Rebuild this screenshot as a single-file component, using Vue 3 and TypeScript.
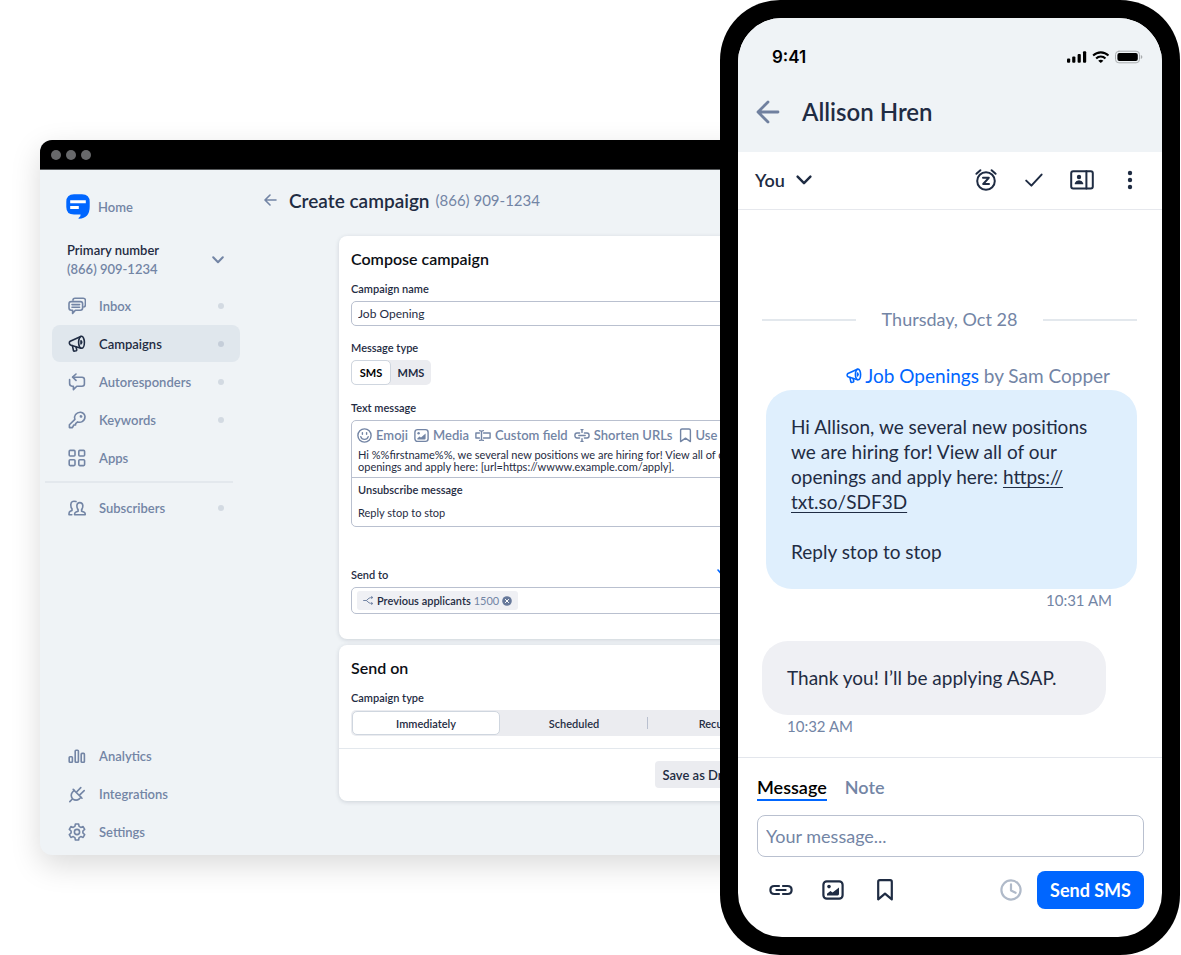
<script setup lang="ts">
import { ref } from 'vue'

interface NavItem {
  label: string
  icon: string
  dot?: boolean
  active?: boolean
}

const icons: Record<string, string[]> = {
  inbox: [
    'M5 3.2V3Q5 1.2 7 1.2H15.2Q17.4 1.2 17.4 3.3V7.8Q17.4 9.8 15.8 10',
    'M3.2 4.6H12.4Q14.6 4.6 14.6 6.7V11Q14.6 13.2 12.4 13.2H7.4L4.6 16.4V13.2H3.2Q1 13.2 1 11V6.7Q1 4.6 3.2 4.6Z',
    'M4 7.6H11.6M4 10.2H11.6',
  ],
  campaigns: [
    'M10.6 7.3a2.9 6 0 1 0 5.8 0a2.9 6 0 1 0 -5.8 0Z',
    'M12.8 1.4L2.2 6.2Q1 7 1.4 8.6Q1.8 9.9 3 10.2L13 13.2',
    'M4.4 10.6L5.4 15.4Q5.7 16.4 6.8 16.1L8.2 15.7Q8.9 15.4 8.7 14.6L8 11.8',
    'M13 5.8Q14.4 7.3 13 8.8Z',
  ],
  auto: [
    'M8 1L4.6 4.2L8 7.4',
    'M4.8 4.2H14Q16.4 4.2 16.4 6.5V11Q16.4 13.2 14 13.2H8.8L5.4 16.6V13.2H4Q1.6 13 1.6 10.6V6.6',
  ],
  keywords: [
    'M6.9 8.4Q6 5.6 7.6 3.4Q9.6 1 12.6 1.2Q16.4 1.8 17 5.4Q17 9 14.2 10.6Q12 11.8 9.6 10.9L7.6 12.6V14H5.8L4.4 16.6H1.4V13.8Z',
    'M12.4 5.4a.6 .6 0 1 0 1.2 0a.6 .6 0 1 0 -1.2 0Z',
  ],
  apps: [
    'M2.2 1.4H6Q7 1.4 7 2.4V6Q7 7 6 7H2.2Q1.2 7 1.2 6V2.4Q1.2 1.4 2.2 1.4Z',
    'M11.8 1.4H15.6Q16.6 1.4 16.6 2.4V6Q16.6 7 15.6 7H11.8Q10.8 7 10.8 6V2.4Q10.8 1.4 11.8 1.4Z',
    'M2.2 10.8H6Q7 10.8 7 11.8V15.6Q7 16.6 6 16.6H2.2Q1.2 16.6 1.2 15.6V11.8Q1.2 10.8 2.2 10.8Z',
    'M11.8 10.8H15.6Q16.6 10.8 16.6 11.8V15.6Q16.6 16.6 15.6 16.6H11.8Q10.8 16.6 10.8 15.6V11.8Q10.8 10.8 11.8 10.8Z',
  ],
  subscribers: [
    'M6.6 15.8H17.2Q17.4 13.6 15.8 13L13.6 12.2V10.6Q15 9 14.8 6.4Q14.5 3.6 11.8 3.6Q9.2 3.6 8.9 6.4Q8.7 9 10.1 10.6V12.2L8 13Q6.4 13.6 6.6 15.8Z',
    'M8 2.6Q3.2 1.2 2.8 5.6Q2.7 8.4 4 9.8V11.4L2.2 12.2Q.8 12.9 1 15.8H3.8',
  ],
  analytics: [
    'M2 9.8H3.6Q4.4 9.8 4.4 10.6V14.4Q4.4 15.2 3.6 15.2H2Q1.2 15.2 1.2 14.4V10.6Q1.2 9.8 2 9.8Z',
    'M8 3.2H9.6Q10.4 3.2 10.4 4V14.4Q10.4 15.2 9.6 15.2H8Q7.2 15.2 7.2 14.4V4Q7.2 3.2 8 3.2Z',
    'M14 6.4H15.6Q16.4 6.4 16.4 7.2V14.4Q16.4 15.2 15.6 15.2H14Q13.2 15.2 13.2 14.4V7.2Q13.2 6.4 14 6.4Z',
  ],
  integrations: [
    'M5.2 4.4L14 13.2',
    'M6.2 5.4L4.4 7.2Q2 10.4 4.6 13.8Q8 16.4 11.2 14L13 12.2',
    'M8.8 6.8L12.8 2.6M11.8 9.8L16.2 5.6M4.4 14L1.8 16.6',
  ],
  settings: [
    'M6.9 3.4L7.4 1H10.6L11.1 3.4L12.8 4.4L15.1 3.6L16.7 6.4L14.9 8V10L16.7 11.6L15.1 14.4L12.8 13.6L11.1 14.6L10.6 17H7.4L6.9 14.6L5.2 13.6L2.9 14.4L1.3 11.6L3.1 10V8L1.3 6.4L2.9 3.6L5.2 4.4Z',
    'M6.4 9a2.6 2.6 0 1 0 5.2 0a2.6 2.6 0 1 0 -5.2 0Z',
  ],
}

const primaryNav: NavItem[] = [
  { label: 'Inbox', icon: 'inbox', dot: true },
  { label: 'Campaigns', icon: 'campaigns', dot: true, active: true },
  { label: 'Autoresponders', icon: 'auto', dot: true },
  { label: 'Keywords', icon: 'keywords', dot: true },
  { label: 'Apps', icon: 'apps' },
]
const peopleNav: NavItem[] = [{ label: 'Subscribers', icon: 'subscribers', dot: true }]
const footNav: NavItem[] = [
  { label: 'Analytics', icon: 'analytics' },
  { label: 'Integrations', icon: 'integrations' },
  { label: 'Settings', icon: 'settings' },
]
const navGroups = [
  { name: 'primary', items: primaryNav },
  { name: 'people', items: peopleNav },
  { name: 'foot', items: footNav },
]

const campaignName = ref('Job Opening')
const messageType = ref('SMS')
const schedule = ref('Immediately')
const draft = ref('')
const tab = ref('Message')
</script>

<template>
  <div class="stage">
    <section class="browser">
      <div class="titlebar"><i></i><i></i><i></i></div>
      <div class="app">
        <aside class="sidebar">
          <a class="home" href="#">
            <svg width="24" height="25" viewBox="0 0 24 25">
              <path d="M8 .3H16Q23.7 .3 23.7 8V12.5Q23.7 24.3 13 24.8Q12 24.8 12.6 24Q15 22.6 14.6 20.6H8Q.3 20.6 .3 13V8Q.3 .3 8 .3Z" />
              <path d="M4.2 6.2H19.8V9.2H4.2ZM4.2 12H12.8V15H4.2Z" />
            </svg>
            Home
          </a>
          <button class="account" type="button">
            <span><strong>Primary number</strong><em>(866) 909-1234</em></span>
            <svg width="12" height="8" viewBox="0 0 12 8"><path d="M1.2 1.2L6 6.2L10.8 1.2" /></svg>
          </button>
          <nav v-for="group in navGroups" :key="group.name" :class="['nav', group.name]">
            <a v-for="item in group.items" :key="item.label" href="#" :class="{ active: item.active }">
              <svg width="18" height="18" viewBox="0 0 18 18">
                <path v-for="d in icons[item.icon]" :key="d" :d="d" />
              </svg>
              <span>{{ item.label }}</span>
              <i v-if="item.dot"></i>
            </a>
          </nav>
        </aside>

        <main class="main">
          <header class="page-head">
            <a href="#" aria-label="Back">
              <svg width="13" height="12" viewBox="0 0 13 12"><path d="M12 6H1.2M6 1L1 6L6 11" /></svg>
            </a>
            <h1>Create campaign</h1>
            <span>(866) 909-1234</span>
          </header>

          <form class="cards" @submit.prevent>
            <section class="card">
              <h2>Compose campaign</h2>
              <label class="label" for="campaign-name">Campaign name</label>
              <input id="campaign-name" v-model="campaignName" class="field" type="text" />

              <span class="label">Message type</span>
              <div class="toggle">
                <button
                  v-for="t in ['SMS', 'MMS']"
                  :key="t"
                  type="button"
                  :class="{ on: messageType === t }"
                  @click="messageType = t"
                >{{ t }}</button>
              </div>

              <span class="label">Text message</span>
              <div class="editor">
                <div class="tools">
                  <button type="button">
                    <svg width="15" height="15" viewBox="0 0 15 15">
                      <circle cx="7.5" cy="7.5" r="6.6" />
                      <path d="M5.4 4.6V6.2M9.6 4.6V6.2M3.8 8.6Q4.6 11.4 7.5 11.4Q10.4 11.4 11.2 8.6" />
                    </svg>
                    Emoji
                  </button>
                  <button type="button">
                    <svg width="15" height="15" viewBox="0 0 15 15">
                      <rect x=".9" y="1.6" width="13.2" height="11.8" rx="2.6" />
                      <path class="solid" d="M3.4 11.4V10.2L5.6 8.4L7 9.4L11.6 5.6V10.4Q11.6 11.4 10.6 11.4Z" />
                      <circle class="solid" cx="4.6" cy="5.2" r="1.2" />
                    </svg>
                    Media
                  </button>
                  <button type="button">
                    <svg width="16" height="15" viewBox="0 0 16 15">
                      <path d="M4.4 5H.9V10H4.4M8.6 5H15.1V10H8.6M4.6 2.6Q6.4 2.6 6.5 3.8V11.2Q6.4 12.4 4.6 12.4M8.4 2.6Q6.6 2.6 6.5 3.8M6.5 11.2Q6.6 12.4 8.4 12.4" />
                    </svg>
                    Custom field
                  </button>
                  <button type="button">
                    <svg width="16" height="15" viewBox="0 0 16 15">
                      <path d="M5.6 10H3Q.9 10 .9 7.5Q.9 5 3 5H5.6M10.4 5H13Q15.1 5 15.1 7.5Q15.1 10 13 10H10.4M4.8 7.5H11.2M8 2.2V4.4M8 10.6V12.8M7 1.6H9M7 13.4H9" />
                    </svg>
                    Shorten URLs
                  </button>
                  <button type="button">
                    <svg width="13" height="15" viewBox="0 0 13 15">
                      <path d="M3 1H10Q11.4 1 11.4 2.4V13.6L6.5 10.2L1.6 13.6V2.4Q1.6 1 3 1Z" />
                    </svg>
                    Use template
                  </button>
                </div>
                <p class="body">
                  Hi %%firstname%%, we several new positions we are hiring for! View all of our<br />
                  openings and apply here: [url=https://wwww.example.com/apply].
                </p>
                <div class="unsub">
                  <strong>Unsubscribe message</strong>
                  <p>Reply stop to stop</p>
                </div>
              </div>

              <div class="send-row">
                <span class="label">Send to</span>
                <svg width="80" height="10" viewBox="0 0 80 10"><path d="M1 4L4 7.4L7.4 4" /></svg>
              </div>
              <div class="recipients">
                <span class="chip">
                  <svg width="11" height="9" viewBox="0 0 11 9"><path d="M.6 4.5H3.4L6 2.2Q7 1.5 9.4 1.5M3.4 4.5L6 6.8Q7 7.5 9.4 7.5M8.6 .6L9.8 1.5L8.6 2.4M8.6 6.6L9.8 7.5L8.6 8.4" /></svg>
                  <b>Previous applicants</b> 1500
                  <button type="button" aria-label="Remove">
                    <svg width="10" height="10" viewBox="0 0 10 10">
                      <circle cx="5" cy="5" r="4.8" /><path d="M3.4 3.4L6.6 6.6M6.6 3.4L3.4 6.6" />
                    </svg>
                  </button>
                </span>
              </div>
            </section>

            <section class="card send-on">
              <h2>Send on</h2>
              <span class="label">Campaign type</span>
              <div class="segments">
                <button
                  v-for="s in ['Immediately', 'Scheduled', 'Recurring']"
                  :key="s"
                  type="button"
                  :class="{ on: schedule === s }"
                  @click="schedule = s"
                >{{ s }}</button>
              </div>
              <footer><button type="button">Save as Draft</button></footer>
            </section>
          </form>
        </main>
      </div>
    </section>

    <section class="phone">
      <div class="screen">
        <header class="top">
          <div class="status">
            <span>9:41</span>
            <svg width="76" height="14" viewBox="0 0 76 14">
              <rect x="0" y="8.6" width="3.2" height="4.2" rx="1" />
              <rect x="5.2" y="6.6" width="3.2" height="6.2" rx="1" />
              <rect x="10.6" y="4" width="3.2" height="8.8" rx="1" />
              <rect x="16" y="1.2" width="3.2" height="11.6" rx="1" />
              <path d="M25.4 4.8Q29 1.2 33.8 1.2Q38.6 1.2 42.2 4.8L40.8 6.3Q37.8 3.4 33.8 3.4Q29.8 3.4 26.8 6.3Z" />
              <path d="M28.4 7.8Q30.6 5.4 33.8 5.4Q37 5.4 39.2 7.8L37.7 9.3Q36 7.6 33.8 7.6Q31.6 7.6 29.9 9.3Z" />
              <path d="M31.2 10.7Q33.8 8.7 36.4 10.7L33.8 13Z" />
              <rect class="case" x="48.5" y="1.2" width="24" height="11.6" rx="3.4" />
              <rect x="50.4" y="3" width="20.4" height="8" rx="2" />
              <path class="cap" d="M73.8 5V9Q75.4 8.4 75.4 7Q75.4 5.6 73.8 5Z" />
            </svg>
          </div>
          <div class="contact">
            <a href="#" aria-label="Back">
              <svg width="24" height="24" viewBox="0 0 24 24"><path d="M22 12H2M12 2L2 12L12 22" /></svg>
            </a>
            <h2>Allison Hren</h2>
          </div>
        </header>

        <div class="actions">
          <button class="you" type="button">
            You
            <svg width="16" height="10" viewBox="0 0 16 10"><path d="M1.6 1.6L8 8.2L14.4 1.6" /></svg>
          </button>
          <button type="button" aria-label="Snooze">
            <svg width="24" height="24" viewBox="0 0 24 24">
              <circle cx="12" cy="13" r="8.8" />
              <path d="M2.4 5.8L6.4 2.2M21.6 5.8L17.6 2.2M9 9.8H14.8L9.2 16H15" />
            </svg>
          </button>
          <button type="button" aria-label="Done">
            <svg width="24" height="24" viewBox="0 0 24 24"><path d="M4.2 12.6L9.4 17.6L19.6 6.6" /></svg>
          </button>
          <button type="button" aria-label="Contact details">
            <svg width="24" height="24" viewBox="0 0 24 24">
              <rect x="1.2" y="3.2" width="21.6" height="17.4" rx="2" /><path d="M16.4 3.2V20.6" />
              <circle class="solid" cx="9" cy="9" r="2.2" />
              <path class="solid" d="M4.8 16.2V15Q6 12.2 9 12.2Q12 12.2 13.2 15V16.2Z" />
            </svg>
          </button>
          <button type="button" aria-label="More">
            <svg width="24" height="24" viewBox="0 0 24 24">
              <circle class="solid" cx="12" cy="5" r="2.2" /><circle class="solid" cx="12" cy="12" r="2.2" /><circle class="solid" cx="12" cy="19" r="2.2" />
            </svg>
          </button>
        </div>

        <div class="chat">
          <div class="date"><hr /><span>Thursday, Oct 28</span><hr /></div>
          <p class="source">
            <svg width="16" height="16" viewBox="0 0 18 18"><path v-for="d in icons.campaigns" :key="d" :d="d" /></svg>
            <a href="#">Job Openings</a>&nbsp;by Sam Copper
          </p>
          <div class="bubble out">
            Hi Allison, we several new positions<br />we are hiring for! View all of our<br />openings and apply here:
            <a href="#">https://<br />txt.so/SDF3D</a><br /><br />Reply stop to stop
          </div>
          <time class="out">10:31 AM</time>
          <div class="bubble in">Thank you! I’ll be applying ASAP.</div>
          <time class="in">10:32 AM</time>
        </div>

        <form class="composer" @submit.prevent>
          <div class="tabs">
            <button
              v-for="t in ['Message', 'Note']"
              :key="t"
              type="button"
              :class="{ on: tab === t }"
              @click="tab = t"
            >{{ t }}</button>
          </div>
          <input v-model="draft" type="text" placeholder="Your message..." aria-label="Your message" />
          <div class="bar">
            <button type="button" aria-label="Insert link">
              <svg width="24" height="24" viewBox="0 0 24 24"><path d="M10 16H5.4Q1.4 16 1.4 12Q1.4 8 5.4 8H10M14 8H18.6Q22.6 8 22.6 12Q22.6 16 18.6 16H14M7.4 12H16.6" /></svg>
            </button>
            <button type="button" aria-label="Insert picture">
              <svg width="24" height="24" viewBox="0 0 24 24">
                <rect x="2.4" y="3.4" width="19.2" height="17.2" rx="3.4" />
                <path class="solid" d="M6 17.4V15.8L9.4 13L11.6 14.6L18 9.4V16Q18 17.4 16.6 17.4Z" />
                <circle class="solid" cx="8" cy="8.6" r="1.8" />
              </svg>
            </button>
            <button type="button" aria-label="Saved replies">
              <svg width="24" height="24" viewBox="0 0 24 24"><path d="M6.8 2.2H17.2Q18.8 2.2 18.8 3.8V21.4L12 15.6L5.2 21.4V3.8Q5.2 2.2 6.8 2.2Z" /></svg>
            </button>
            <button class="later" type="button" aria-label="Schedule">
              <svg width="24" height="24" viewBox="0 0 24 24"><circle cx="12" cy="12" r="9.6" /><path d="M12 6.4V12.6L16.6 14.8" /></svg>
            </button>
            <button class="send" type="submit">Send SMS</button>
          </div>
        </form>
      </div>
    </section>
  </div>
</template>

<style>
body {
  margin: 0;
  background: #fff;
}
</style>

<style scoped>
* {
  box-sizing: border-box;
}
.stage {
  --ink: #1f2c43;
  --muted: #7385a5;
  --line: #e3e8ed;
  --pale: #eff3f6;
  --blue: #0066ff;
  --edge: #b9c0cf;
  display: grid;
  grid-template-columns: 40px minmax(0, 1fr) 460px 1px;
  overflow: hidden;
  font-family: Lato, "Open Sans", sans-serif;
  color: var(--ink);
}
button,
input {
  font: inherit;
  color: inherit;
  border: 0;
  padding: 0;
  margin: 0;
  background: none;
}
button {
  cursor: pointer;
}
a {
  color: inherit;
  text-decoration: none;
}
h1,
h2,
p {
  margin: 0;
}
svg {
  display: block;
  flex: none;
}
svg path,
svg circle,
svg rect {
  fill: none;
  stroke: currentColor;
  stroke-linecap: round;
  stroke-linejoin: round;
}
svg .solid {
  fill: currentColor;
  stroke: none;
}

/* Browser window */
.browser {
  grid-column: 2 / 4;
  grid-row: 1;
  display: flex;
  flex-direction: column;
  margin: 140px 40px 100px 0;
  border-radius: 12px;
  background: var(--pale);
  box-shadow: 0 10px 30px rgba(0, 0, 0, 0.15);
}
.titlebar {
  display: flex;
  align-items: center;
  gap: 5px;
  height: 30px;
  padding-left: 11px;
  border-bottom: 1px solid #55585a;
  border-radius: 12px 12px 0 0;
  background: #000;
}
.titlebar i {
  width: 10px;
  height: 10px;
  border-radius: 50%;
  background: #68696b;
}
.app {
  flex: 1;
  display: flex;
}

/* Sidebar */
.sidebar {
  display: flex;
  flex-direction: column;
  flex: none;
  width: 200px;
  padding: 24px 0 5px 12px;
  color: var(--muted);
  font-size: 13px;
  font-weight: 600;
}
.home {
  display: flex;
  align-items: center;
  gap: 8px;
  padding-left: 14px;
}
.home path {
  stroke: none;
}
.home path:first-child {
  fill: var(--blue);
}
.home path:last-child {
  fill: #fff;
}
.account {
  display: flex;
  align-items: center;
  justify-content: space-between;
  margin: 22px 16px 8px 15px;
  text-align: left;
}
.account span {
  display: grid;
}
.account strong,
.account em {
  font-style: normal;
  font-weight: 600;
  line-height: 19px;
}
.account strong {
  color: var(--ink);
}
.account path {
  stroke-width: 2;
}
.nav {
  display: grid;
  gap: 1px;
}
.nav a {
  display: flex;
  align-items: center;
  height: 37px;
  padding: 0 16px;
  border-radius: 8px;
}
.nav span {
  flex: 1;
  margin-left: 13px;
}
.nav path {
  stroke-width: 1.6;
}
.nav i {
  width: 6px;
  height: 6px;
  border-radius: 50%;
  background: #d3dae2;
}
.nav .active {
  background: #e0e7ed;
  color: var(--ink);
}
.nav .active i {
  background: #c5ced9;
}
.nav.people {
  position: relative;
  margin-top: 5px;
  padding-top: 8px;
}
.nav.people::before {
  content: "";
  position: absolute;
  top: 0;
  left: -7px;
  right: 7px;
  height: 2px;
  background: var(--line);
}
.nav.foot {
  margin-top: auto;
}

/* Main column */
.main {
  flex: 1;
  min-width: 0;
  padding-left: 24px;
}
.page-head {
  display: flex;
  align-items: center;
  height: 20px;
  margin-top: 20px;
  color: var(--muted);
}
.page-head path {
  stroke-width: 1.6;
}
.page-head h1 {
  margin: 0 6px 0 12px;
  color: var(--ink);
  font-size: 19px;
  font-weight: 600;
  white-space: nowrap;
}
.page-head span {
  font-size: 15px;
  white-space: nowrap;
}
.cards {
  display: grid;
  gap: 6px;
  max-width: 470px;
  margin: 26px 0 0 75px;
}
.card {
  padding: 13px 12px 25px;
  border-radius: 8px;
  background: #fff;
  box-shadow: 0 1px 4px rgba(31, 44, 67, 0.16);
}
.card h2 {
  color: #0b0e14;
  font-size: 16px;
  font-weight: 600;
  line-height: 20px;
}
.label {
  display: block;
  margin: 12px 0 5px;
  font-size: 11px;
  font-weight: 600;
  line-height: 15px;
}
.field {
  display: block;
  width: 100%;
  height: 25px;
  padding: 0 6px;
  border: 1px solid var(--edge);
  border-radius: 5px;
  font-size: 12px;
}
.field + .label {
  margin-top: 14px;
}
.toggle {
  display: flex;
  width: max-content;
  height: 25px;
  border-radius: 5px;
  background: #ebecf0;
}
.toggle button {
  width: 40px;
  border: 1px solid transparent;
  border-radius: 5px;
  font-size: 11px;
  font-weight: 700;
}
.toggle .on {
  border-color: #cfd6df;
  background: #fff;
  color: #000;
}
.toggle + .label {
  margin-top: 15px;
}
.editor {
  border: 1px solid var(--edge);
  border-radius: 5px;
}
.tools {
  display: flex;
  gap: 6px;
  height: 28px;
  padding-left: 5px;
  overflow: hidden;
  color: var(--muted);
  font-size: 13px;
  font-weight: 600;
}
.tools button {
  display: flex;
  align-items: center;
  gap: 4px;
  white-space: nowrap;
}
.tools path,
.tools circle,
.tools rect {
  stroke-width: 1.4;
}
.body {
  height: 29px;
  padding-left: 6px;
  border-bottom: 1px solid var(--edge);
  font-size: 11px;
  line-height: 12px;
  white-space: nowrap;
  overflow: hidden;
}
.unsub {
  padding: 4px 6px 6px;
  font-size: 11px;
  line-height: 15px;
}
.unsub strong {
  font-weight: 600;
}
.unsub p {
  margin-top: 8px;
}
.send-row {
  display: flex;
  justify-content: space-between;
  align-items: center;
  margin-top: 28px;
}
.send-row path {
  stroke: var(--blue);
  stroke-width: 1.6;
}
.recipients {
  display: flex;
  align-items: center;
  height: 27px;
  padding-left: 5px;
  border: 1px solid var(--edge);
  border-radius: 5px;
}
.chip {
  display: flex;
  align-items: center;
  gap: 3px;
  height: 19px;
  padding: 0 6px;
  border-radius: 3px;
  background: #eff0f4;
  color: var(--muted);
  font-size: 11px;
}
.chip b {
  color: var(--ink);
  font-weight: 600;
}
.chip circle {
  fill: #66789a;
  stroke: none;
}
.chip button path {
  stroke: #fff;
}
.send-on {
  padding-bottom: 13px;
}
.segments {
  display: grid;
  grid-template-columns: repeat(3, 1fr);
  height: 26px;
  padding: 1px;
  border-radius: 5px;
  background: #ebecf0;
  font-size: 11px;
  font-weight: 600;
}
.segments button {
  position: relative;
  border: 1px solid transparent;
  border-radius: 5px;
}
.segments .on {
  border-color: #cfd6df;
  background: #fff;
}
.segments button:last-child::before {
  content: "";
  position: absolute;
  left: -2px;
  top: 5px;
  bottom: 5px;
  width: 1px;
  background: var(--edge);
}
.send-on footer {
  display: flex;
  margin: 12px -12px 0;
  padding: 12px 64px 0 12px;
  justify-content: flex-end;
  border-top: 1px solid var(--line);
}
.send-on footer button {
  height: 27px;
  padding: 0 7px;
  border-radius: 4px;
  background: #ebecf0;
  font-size: 13px;
  font-weight: 600;
}

/* Phone */
.phone {
  z-index: 1;
  grid-column: 3;
  grid-row: 1;
  padding: 18px;
  border-radius: 60px;
  background: #000;
}
.screen {
  display: flex;
  flex-direction: column;
  overflow: hidden;
  border-radius: 44px;
  background: #fff;
}
.top {
  padding: 28px 18px 24px;
  background: var(--pale);
}
.status {
  display: flex;
  align-items: center;
  justify-content: space-between;
  height: 22px;
  padding: 0 1px 0 16px;
  color: #000;
  font-family: Inter, sans-serif;
  font-size: 17px;
  font-weight: 600;
}
.status path,
.status rect {
  fill: #000;
  stroke: none;
}
.status .case {
  fill: none;
  stroke: #a9acae;
}
.status .cap {
  fill: #a9acae;
}
.contact {
  display: flex;
  align-items: center;
  gap: 22px;
  margin-top: 28px;
}
.contact a {
  color: #70809f;
}
.contact path {
  stroke-width: 2.8;
}
.contact h2 {
  font-size: 24px;
  font-weight: 600;
  line-height: 32px;
}
.actions {
  display: flex;
  align-items: center;
  gap: 24px;
  height: 58px;
  padding: 0 20px 2px 17px;
  border-bottom: 1px solid #e6e8ed;
}
.actions path,
.actions circle,
.actions rect {
  stroke-width: 2;
}
.you {
  display: flex;
  align-items: center;
  gap: 11px;
  margin-right: auto;
  font-size: 18px;
  font-weight: 600;
}
.you path {
  stroke-width: 2.4;
}
.chat {
  display: flex;
  flex-direction: column;
  padding: 97px 25px 19px 24px;
  font-size: 19px;
  line-height: 25px;
}
.date {
  display: flex;
  align-items: center;
  gap: 26px;
  color: var(--muted);
  font-size: 18px;
}
.date hr {
  flex: 1;
  height: 2px;
  margin: 0;
  border: 0;
  background: var(--line);
}
.source {
  display: flex;
  align-items: center;
  justify-content: flex-end;
  margin: 31px 27px 2px 0;
  color: var(--muted);
}
.source a,
.source svg {
  color: var(--blue);
}
.source svg {
  margin-right: 3px;
}
.source path {
  stroke-width: 1.8;
}
.bubble {
  padding: 24px 25px 25px;
  border-radius: 26px;
}
.bubble.out {
  margin-left: 4px;
  background: #dfeffd;
}
.bubble.out a {
  text-decoration: underline;
  text-underline-offset: 3px;
}
.bubble.in {
  margin: 29px 31px 0 0;
  background: #eff0f4;
}
time {
  color: var(--muted);
  font-size: 15px;
  line-height: 23px;
}
time.out {
  align-self: flex-end;
  margin-right: 25px;
}
time.in {
  margin-left: 25px;
}
.composer {
  padding: 17px 18px 28px 19px;
  border-top: 1px solid #e3e6ec;
}
.tabs {
  display: flex;
  gap: 18px;
  margin-bottom: 14px;
  font-size: 18px;
  font-weight: 600;
  line-height: 24px;
}
.tabs button {
  border-bottom: 2px solid transparent;
  color: var(--muted);
}
.tabs .on {
  border-color: var(--blue);
  color: #000;
}
.composer input {
  display: block;
  width: 100%;
  height: 42px;
  padding: 0 8px;
  border: 1px solid var(--edge);
  border-radius: 8px;
  font-size: 18px;
}
.composer input::placeholder {
  color: var(--muted);
  opacity: 1;
}
.bar {
  display: flex;
  align-items: center;
  gap: 28px;
  margin-top: 14px;
  padding-left: 12px;
}
.bar path,
.bar circle,
.bar rect {
  stroke-width: 2.2;
}
.later {
  margin-left: auto;
  color: #b0bac9;
}
.bar .send {
  height: 38px;
  margin-left: -14px;
  padding: 0 13px;
  border-radius: 8px;
  background: var(--blue);
  color: #fff;
  font-size: 18px;
  font-weight: 700;
}
</style>
